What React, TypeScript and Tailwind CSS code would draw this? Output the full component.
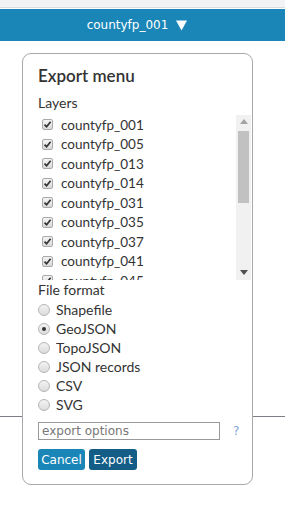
import React, { useState } from 'react';

const layers = [
  'countyfp_001',
  'countyfp_005',
  'countyfp_013',
  'countyfp_014',
  'countyfp_031',
  'countyfp_035',
  'countyfp_037',
  'countyfp_041',
  'countyfp_045',
];

const formats = ['Shapefile', 'GeoJSON', 'TopoJSON', 'JSON records', 'CSV', 'SVG'];

const CheckBox: React.FC = () => (
  <span className="w-[11px] h-[11px] rounded-[2px] border border-[#a9a9a9] bg-gradient-to-b from-[#f4f4f4] to-[#d9d9d9] flex items-center justify-center shrink-0">
    <svg width="9" height="9" viewBox="0 0 9 9">
      <path d="M1.5 4.6 L3.6 6.8 L7.6 1.8" fill="none" stroke="#333" strokeWidth="1.7" />
    </svg>
  </span>
);

const Radio: React.FC<{ on: boolean }> = ({ on }) => (
  <span className="w-[12px] h-[12px] rounded-full border border-[#b5b5b5] bg-gradient-to-b from-[#f3f3f3] to-[#dcdcdc] flex items-center justify-center shrink-0">
    {on && <span className="w-[4px] h-[4px] rounded-full bg-[#333]" />}
  </span>
);

const App: React.FC = () => {
  const [format, setFormat] = useState('GeoJSON');

  return (
    <div className="relative w-[285px] h-[507px] bg-white overflow-hidden font-['Lato',sans-serif] text-[#333]">
      {/* map line behind the menu */}
      <div className="absolute left-0 right-0 top-[416px] h-px bg-[#7d7d87]" />

      <div className="h-[7px] bg-[#f2f3f5]" />
      <div className="h-px bg-[#dcdcdc]" />
      <div className="h-px bg-white" />
      <div className="h-[32px] bg-[#1a86b8] flex items-center justify-center gap-[8px] pr-[11px] text-white text-[12px] font-['DejaVu_Sans',sans-serif]">
        <span>countyfp_001</span>
        <svg width="11" height="11" viewBox="0 0 11 11">
          <path d="M0 0.5 H11 L5.5 10.5 Z" fill="#fff" />
        </svg>
      </div>

      <div className="relative z-10 ml-[22px] mt-[12px] w-[231px] h-[432px] bg-white border border-[#a8a8a8] rounded-[9px] pl-[15px] pr-px pt-[12px]">
        <div className="text-[17px] leading-[20px] font-semibold">Export menu</div>

        <div className="mt-[8px] text-[14px] leading-[18px]">Layers</div>
        <div className="mt-[3px] h-[165px] flex">
          <div className="flex-1 overflow-hidden">
            {layers.map((l) => (
              <div key={l} className="h-[19.5px] flex items-center gap-[8px] pl-[4px] text-[13.5px]">
                <CheckBox />
                <span>{l}</span>
              </div>
            ))}
          </div>
          <div className="w-[15px] bg-[#f1f1f1] flex flex-col items-center">
            <svg className="mt-[4px]" width="8" height="5" viewBox="0 0 8 5">
              <path d="M0 5 L4 0 L8 5 Z" fill="#a3a3a3" />
            </svg>
            <div className="mt-[7px] w-[11px] h-[72px] bg-[#c1c1c1]" />
            <div className="flex-1" />
            <svg className="mb-[5px]" width="8" height="5" viewBox="0 0 8 5">
              <path d="M0 0 L8 0 L4 5 Z" fill="#505050" />
            </svg>
          </div>
        </div>

        <div className="mt-[1px] text-[14px] leading-[18px]">File format</div>
        <div className="mt-[1px] flex flex-col">
          {formats.map((f) => (
            <label key={f} className="h-[19px] flex items-center gap-[6px] text-[14px]" onClick={() => setFormat(f)}>
              <Radio on={format === f} />
              <span>{f}</span>
            </label>
          ))}
        </div>

        <div className="mt-[8px] flex items-center">
          <input
            className="w-[182px] h-[18px] border border-[#999] px-[3px] text-[12px] font-['DejaVu_Sans',sans-serif] placeholder:text-[#777] outline-none"
            placeholder="export options"
          />
          <span className="ml-[13px] text-[12px] text-[#7ea3d6] font-['DejaVu_Sans',sans-serif]">?</span>
        </div>

        <div className="mt-[9px] flex gap-[4px] font-['DejaVu_Sans',sans-serif]">
          <button className="w-[47px] h-[21px] rounded-[3px] bg-[#1a86b8] text-white text-[12px]">Cancel</button>
          <button className="w-[48px] h-[21px] rounded-[3px] bg-[#135d86] text-white text-[12px]">Export</button>
        </div>
      </div>
    </div>
  );
};

export default App;
